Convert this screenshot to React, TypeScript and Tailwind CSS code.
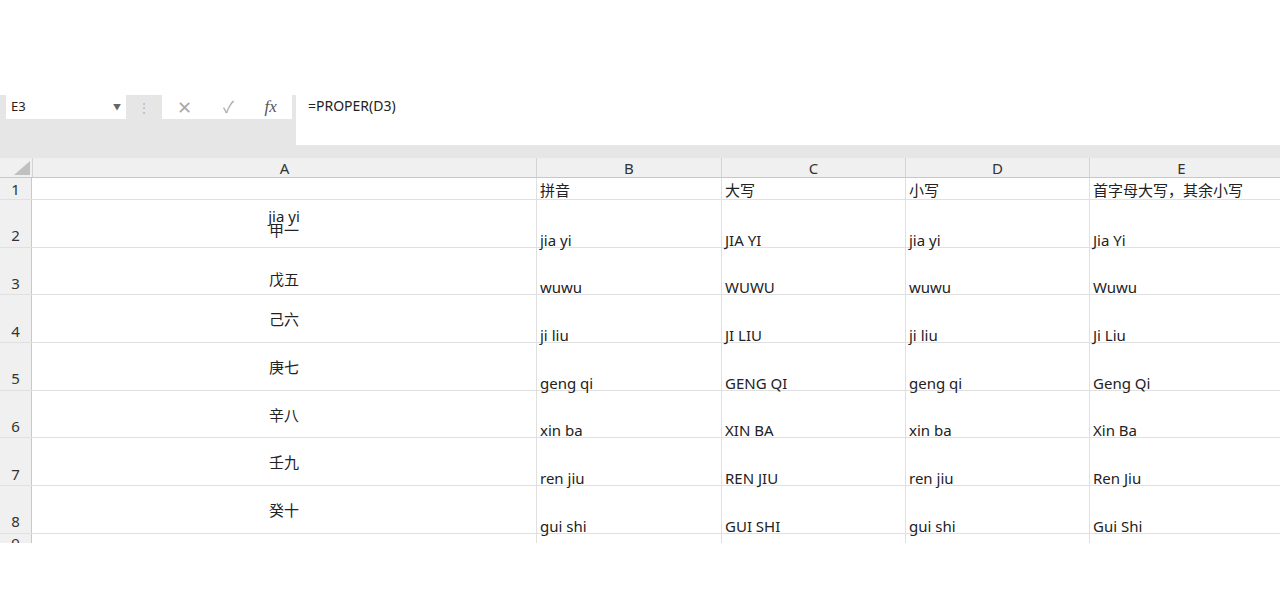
const cols = [
  { k: "A", w: "w-[504px]" },
  { k: "B", w: "w-[185px]" },
  { k: "C", w: "w-[184px]" },
  { k: "D", w: "w-[184px]" },
  { k: "E", w: "w-[184px]" },
];

const rows = [
  ["甲一", "jia yi", "JIA YI", "jia yi", "Jia Yi"],
  ["戊五", "wuwu", "WUWU", "wuwu", "Wuwu"],
  ["己六", "ji liu", "JI LIU", "ji liu", "Ji Liu"],
  ["庚七", "geng qi", "GENG QI", "geng qi", "Geng Qi"],
  ["辛八", "xin ba", "XIN BA", "xin ba", "Xin Ba"],
  ["壬九", "ren jiu", "REN JIU", "ren jiu", "Ren Jiu"],
  ["癸十", "gui shi", "GUI SHI", "gui shi", "Gui Shi"],
];

const font = { fontFamily: '"Noto Sans", "Noto Sans CJK SC", sans-serif' };

export default function App() {
  return (
    <div className="w-[1280px] h-[609px] bg-white overflow-hidden text-[#222]" style={font}>
      <div className="h-[95px]" />
      {/* formula bar */}
      <div className="h-[50px] bg-[#e6e6e6] flex">
        <div className="ml-[6px] w-[120px] h-[24px] bg-white flex items-center justify-between px-[5px] text-[13px]">
          <span>E3</span>
          <span className="text-[8px] text-[#666]">▼</span>
        </div>
        <div className="w-[36px] h-[24px] flex items-center justify-center text-[#bbb] text-[14px]">⋮</div>
        <div className="w-[130px] h-[24px] bg-white flex items-center justify-around text-[#aaa]">
          <span className="text-[18px]">✕</span>
          <span className="text-[16px]">✓</span>
          <span className="text-[17px] italic text-[#555]" style={{ fontFamily: '"Liberation Serif", serif' }}>fx</span>
        </div>
        <div className="w-[4px]" />
        <div className="flex-1 bg-white px-[12px] text-[14px]">=PROPER(D3)</div>
      </div>
      <div className="h-[13px] bg-[#e6e6e6]" />
      {/* header row */}
      <div className="flex h-[20px] bg-[#f0f0f0] border-b border-[#c8c8c8] text-[15px] text-[#333]">
        <div className="w-[32px] relative">
          <div className="absolute right-[2px] bottom-[2px] w-0 h-0 border-l-[16px] border-l-transparent border-b-[14px] border-b-[#c0c0c0]" />
        </div>
        {cols.map((c) => (
          <div key={c.k} className={`${c.w} border-l border-[#d4d4d4] flex items-end justify-center leading-[18px]`}>
            {c.k}
          </div>
        ))}
      </div>
      {/* row 1 */}
      <div className="flex h-[22px] border-b border-[#e0e0e0] text-[15px]">
        <div className="w-[32px] bg-[#f0f0f0] border-r border-[#c8c8c8] flex items-end justify-center text-[#333] leading-[20px]">1</div>
        <div className="w-[504px]" />
        {["拼音", "大写", "小写", "首字母大写，其余小写"].map((t, i) => (
          <div key={i} className={`${cols[i + 1].w} border-l border-[#e0e0e0] px-[3px] leading-[24px] whitespace-nowrap overflow-hidden`}>
            {t}
          </div>
        ))}
      </div>
      {rows.map((r, ri) => (
        <div key={ri} className="flex h-[47.7px] border-b border-[#e0e0e0] text-[15px]">
          <div className="w-[32px] bg-[#f0f0f0] border-r border-[#c8c8c8] flex items-end justify-center text-[#333]">{ri + 2}</div>
          <div className="w-[504px] flex flex-col items-center pt-[8px] leading-[16px]">
            {ri === 0 ? (
              <>
                <span className="leading-[16px]">jia yi</span>
                <span className="leading-[12px]">{r[0]}</span>
              </>
            ) : (
              <span className={`${ri === 1 ? "mt-[14px]" : "mt-[7px]"} leading-[18px]`}>{r[0]}</span>
            )}
          </div>
          {r.slice(1).map((t, i) => (
            <div key={i} className={`${cols[i + 1].w} border-l border-[#e0e0e0] px-[3px] flex items-end leading-[18px] mb-[-2px]`}>
              {t}
            </div>
          ))}
        </div>
      ))}
      <div className="flex h-[9px] overflow-hidden text-[15px]">
        <div className="w-[32px] bg-[#f0f0f0] border-r border-[#c8c8c8] text-center text-[#333] leading-[18px]">9</div>
        <div className="w-[504px]" />
        {cols.slice(1).map((c) => (
          <div key={c.k} className={`${c.w} border-l border-[#e0e0e0]`} />
        ))}
      </div>
    </div>
  );
}
